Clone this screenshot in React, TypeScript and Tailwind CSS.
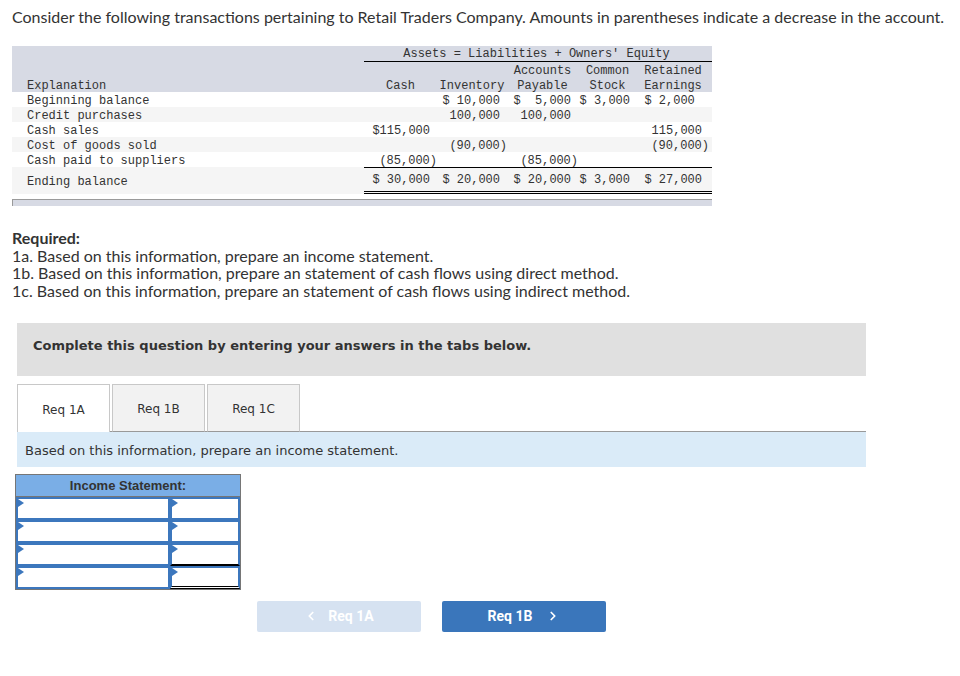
import { ChevronLeft, ChevronRight } from 'lucide-react';

const mono = "font-['Liberation_Mono',monospace] text-[12px]";
const cols = 'grid grid-cols-[352px_73px_70px_71px_59px_72px_3px]';

type Row = { label: string; cells: string[]; stripe?: boolean };

const rows: Row[] = [
  { label: 'Beginning balance', cells: ['', '$ 10,000', '$  5,000', '$ 3,000', '$ 2,000 '] },
  { label: 'Credit purchases', cells: ['', '100,000', '100,000', '', ''], stripe: true },
  { label: 'Cash sales', cells: ['$115,000', '', '', '', '115,000'] },
  { label: 'Cost of goods sold', cells: ['', '(90,000)', '', '', '(90,000)'], stripe: true },
  { label: 'Cash paid to suppliers', cells: ['(85,000)', '', '(85,000)', '', ''] },
];

function Num({ v }: { v: string }) {
  const neg = v.endsWith(')');
  return (
    <div className={`whitespace-pre text-right ${neg ? 'pr-0' : 'pr-[7px]'}`}>{v}</div>
  );
}

function InputCell({ under }: { under?: 'single' | 'double' }) {
  return (
    <div
      className={`relative h-[23px] border-2 border-[#3c77bd] bg-white ${
        under === 'single' ? 'border-b-black' : ''
      } ${under === 'double' ? 'border-b-[3px] border-b-black border-double' : ''}`}
    >
      <span className="absolute left-0 top-0 h-0 w-0 border-l-[6px] border-y-[4px] border-l-[#3c77bd] border-y-transparent" />
    </div>
  );
}

export default function App() {
  return (
    <div className="w-[960px] h-[676px] bg-white text-[#333] overflow-hidden">
      <p className="pl-3 pt-[8px] font-['Lato',sans-serif] text-[16px] leading-[18px]">
        Consider the following transactions pertaining to Retail Traders Company. Amounts in parentheses indicate a decrease in the account.
      </p>

      {/* transactions table */}
      <div className={`ml-3 mt-[20px] w-[700px] ${mono} leading-[15px]`}>
        <div className="bg-[#d7dae4] h-[46px]">
          <div className={cols}>
            <div />
            <div className="col-span-5 h-[16px] pt-[1px] border-b border-black text-center">
              Assets = Liabilities + Owners' Equity
            </div>
            <div className="h-[16px] border-b border-black" />
          </div>
          <div className={`${cols} h-[15px] pt-[2px]`}>
            <div />
            <div />
            <div />
            <div className="text-center">Accounts</div>
            <div className="text-center">Common</div>
            <div className="text-center">Retained</div>
          </div>
          <div className={`${cols} h-[15px] pt-[2px]`}>
            <div className="pl-[15px]">Explanation</div>
            <div className="text-center">Cash</div>
            <div className="text-center">Inventory</div>
            <div className="text-center">Payable</div>
            <div className="text-center">Stock</div>
            <div className="text-center">Earnings</div>
          </div>
        </div>

        {rows.map((r) => (
          <div key={r.label} className={`${cols} h-[15px] pt-[2px] ${r.stripe ? 'bg-[#f5f5f5]' : 'bg-white'}`}>
            <div className="pl-[15px]">{r.label}</div>
            {r.cells.map((c, i) => (
              <Num key={i} v={c} />
            ))}
          </div>
        ))}

        <div className={`${cols} h-[27px] bg-[#f5f5f5] items-center`}>
          <div className="pl-[15px] pt-[3px]">Ending balance</div>
          {['$ 30,000', '$ 20,000', '$ 20,000', '$ 3,000', '$ 27,000'].map((c, i) => (
            <div key={i} className="h-full pt-[2px] flex items-center justify-end border-t border-black border-b-[3px] border-b-black border-double">
              <span className="whitespace-pre pr-[7px]">{c}</span>
            </div>
          ))}
          <div className="h-full border-t border-black border-b-[3px] border-b-black border-double" />
        </div>

        <div className="mt-[5px] h-[7px] border-t border-l border-[#9a9a9a] bg-[#d7dae4]" />
      </div>

      {/* required */}
      <div className="pl-3 mt-[23px] font-['Lato',sans-serif] text-[16px] leading-[17.7px]">
        <p className="font-bold">Required:</p>
        <p>1a. Based on this information, prepare an income statement.</p>
        <p>1b. Based on this information, prepare an statement of cash flows using direct method.</p>
        <p>1c. Based on this information, prepare an statement of cash flows using indirect method.</p>
      </div>

      <div className="ml-[17px] mt-[23px] w-[849px] h-[53px] bg-[#e0e0e0] flex items-center pl-4 pb-[7px] font-['DejaVu_Sans',sans-serif] font-bold text-[13px]">
        Complete this question by entering your answers in the tabs below.
      </div>

      {/* tabs */}
      <div className="ml-[17px] mt-[8px] w-[849px] flex items-end font-['DejaVu_Sans',sans-serif] text-[12px]">
        <div className="w-[93px] h-[48px] pt-[3px] border border-b-0 border-[#c8c8c8] bg-white flex items-center justify-center">
          Req 1A
        </div>
        <div className="w-[2px] self-stretch border-b border-[#999]" />
        <div className="w-[93px] h-[48px] pt-[3px] border border-[#c8c8c8] border-b-[#999] bg-[#f2f2f2] flex items-center justify-center">
          Req 1B
        </div>
        <div className="w-[2px] self-stretch border-b border-[#999]" />
        <div className="w-[93px] h-[48px] pt-[3px] border border-[#c8c8c8] border-b-[#999] bg-[#f2f2f2] flex items-center justify-center">
          Req 1C
        </div>
        <div className="flex-1 self-stretch border-b border-[#999]" />
      </div>
      <div className="ml-[17px] w-[849px] h-[35px] pt-[2px] bg-[#daebf8] flex items-center pl-2 font-['DejaVu_Sans',sans-serif] text-[13px]">
        Based on this information, prepare an income statement.
      </div>

      {/* income statement */}
      <div className="ml-[15px] mt-[7px] w-[226px] border border-[#767676]">
        <div className="h-[22px] bg-[#7aaee6] border-b border-[#767676] flex items-center justify-center font-['Liberation_Sans',sans-serif] font-bold text-[13px] text-[#333]">
          Income Statement:
        </div>
        {[0, 1, 2, 3].map((i) => (
          <div key={i} className="grid grid-cols-[154px_1fr]">
            <InputCell />
            <InputCell under={i === 2 ? 'single' : i === 3 ? 'double' : undefined} />
          </div>
        ))}
      </div>

      {/* nav buttons */}
      <div className="ml-[257px] mt-[11px] flex gap-[21px] font-['Roboto',sans-serif] font-bold text-[14px] text-white">
        <div className="w-[164px] h-[31px] rounded-[2px] bg-[#d6e2f1] flex items-center justify-center gap-[10px]">
          <ChevronLeft size={14} strokeWidth={3} />
          <span>Req 1A</span>
        </div>
        <div className="w-[164px] h-[31px] rounded-[2px] bg-[#3a76bb] flex items-center justify-center gap-[14px]">
          <span>Req 1B</span>
          <ChevronRight size={14} strokeWidth={3} />
        </div>
      </div>
    </div>
  );
}
